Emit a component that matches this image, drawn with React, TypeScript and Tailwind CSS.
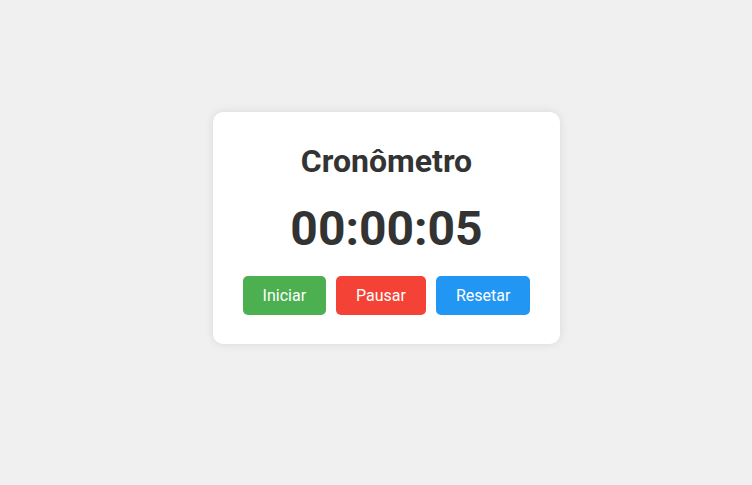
import React, { useState } from 'react'

const buttons = [
  { label: 'Iniciar', color: 'bg-[#4caf50]' },
  { label: 'Pausar', color: 'bg-[#f44336]' },
  { label: 'Resetar', color: 'bg-[#2196f3]' },
]

const App = () => {
  const [time] = useState('00:00:05')
  return (
    <div className="min-h-screen bg-[#f0f0f0] flex justify-center items-center pl-[21px] pb-[30px] font-['Roboto',sans-serif]">
      <div className="w-[347px] bg-white rounded-[10px] shadow-[0_0_10px_rgba(0,0,0,0.1)] pt-[31px] pb-[29px] px-[30px] flex flex-col items-center text-[#333]">
        <h1 className="text-[32px] leading-[37px] font-bold">Cronômetro</h1>
        <div className="mt-[21px] text-[48px] leading-[56px] font-bold">{time}</div>
        <div className="mt-[19px] flex gap-[10px]">
          {buttons.map((b) => (
            <button
              key={b.label}
              className={`${b.color} text-white text-[16px] leading-[19px] px-5 py-[10px] rounded-[5px]`}
            >
              {b.label}
            </button>
          ))}
        </div>
      </div>
    </div>
  )
}

export default App
